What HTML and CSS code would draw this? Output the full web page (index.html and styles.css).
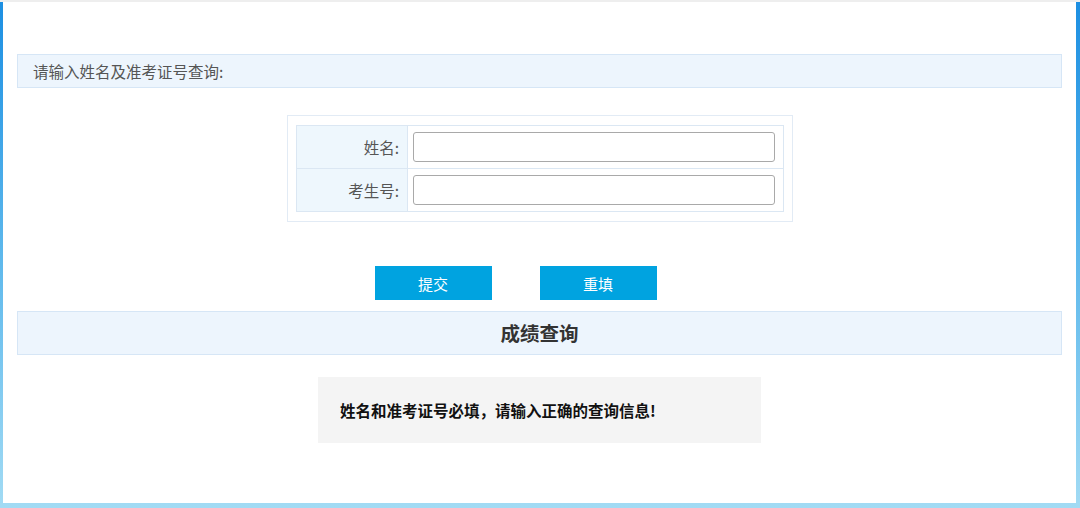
FILE: index.html
```html
<!doctype html>
<html lang="zh-CN">
  <head>
    <meta charset="UTF-8" />
    <meta name="viewport" content="width=device-width, initial-scale=1.0" />
    <title>成绩查询</title>
    <link rel="stylesheet" href="styles.css">
  </head>
  <body>
    <div class="frame">
      <main class="panel">
        <div class="bar tip">请输入姓名及准考证号查询:</div>

        <form class="query">
          <div class="query-box">
            <table class="fields">
              <tr>
                <th>姓名:</th>
                <td><input type="text" name="name"></td>
              </tr>
              <tr>
                <th>考生号:</th>
                <td><input type="text" name="ksh"></td>
              </tr>
            </table>
          </div>

          <div class="actions">
            <button type="button" class="btn">提交</button>
            <button type="reset" class="btn">重填</button>
          </div>
        </form>

        <div class="bar title">成绩查询</div>

        <div class="message">姓名和准考证号必填，请输入正确的查询信息!</div>
      </main>
    </div>
  </body>
</html>
```

FILE: styles.css
```css
html,
body {
  margin: 0;
  padding: 0;
  height: 100%;
}

body {
  background-color: #fff;
  border-top: 2px solid #eeeeee;
  box-sizing: border-box;
  font-family: "Noto Sans CJK SC", "Noto Sans", sans-serif;
  color: #555;
  overflow: hidden;
}

.frame {
  height: 100%;
  box-sizing: border-box;
  padding: 0 4px 5px 3px;
  background: linear-gradient(to bottom, #1c8fe2 0%, #5db8ec 50%, #a2dbf4 100%);
}

.panel {
  height: 100%;
  box-sizing: border-box;
  background-color: #fff;
  padding: 52px 14px 0;
  display: flex;
  flex-direction: column;
}

.bar {
  background-color: #edf5fd;
  border: 1px solid #d6e6f6;
}

.tip {
  height: 32px;
  line-height: 32px;
  padding-left: 15px;
  font-size: 15.5px;
  color: #555;
}

.query {
  margin: 27px 0 0;
  display: flex;
  flex-direction: column;
  align-items: center;
}

.query-box {
  width: 488px;
  padding: 9px 8px;
  border: 1px solid #e2ebf5;
  margin-left: 1px;
}

.fields {
  width: 100%;
  border-collapse: collapse;
  border: 1px solid #dbe7f3;
}

.fields th,
.fields td {
  height: 42px;
  padding: 0;
  border: 1px solid #dbe7f3;
}

.fields th {
  width: 102px;
  padding-right: 8px;
  background-color: #eef7fd;
  text-align: right;
  font-weight: normal;
  font-size: 15.5px;
  color: #555;
}

.fields td {
  padding-left: 5px;
}

.fields tr:first-child input {
  margin-top: -1px;
}

.fields input {
  display: block;
  width: 362px;
  height: 30px;
  box-sizing: border-box;
  border: 1px solid #a9a9a9;
  border-radius: 3px;
  background: #fff;
}

.actions {
  margin-top: 44px;
  display: flex;
  gap: 48px;
  padding-right: 48px;
}

.btn {
  width: 117px;
  height: 34px;
  border: 0;
  background-color: #00a3e0;
  color: #fff;
  font-family: inherit;
  font-size: 15px;
  cursor: pointer;
}

.title {
  margin-top: 11px;
  height: 42px;
  line-height: 42px;
  text-align: center;
  font-size: 19.5px;
  font-weight: bold;
  color: #333;
}

.message {
  margin: 22px auto 0;
  width: 421px;
  height: 66px;
  line-height: 66px;
  padding-left: 22px;
  background-color: #f4f4f4;
  font-size: 15.5px;
  font-weight: bold;
  color: #111;
}
```
